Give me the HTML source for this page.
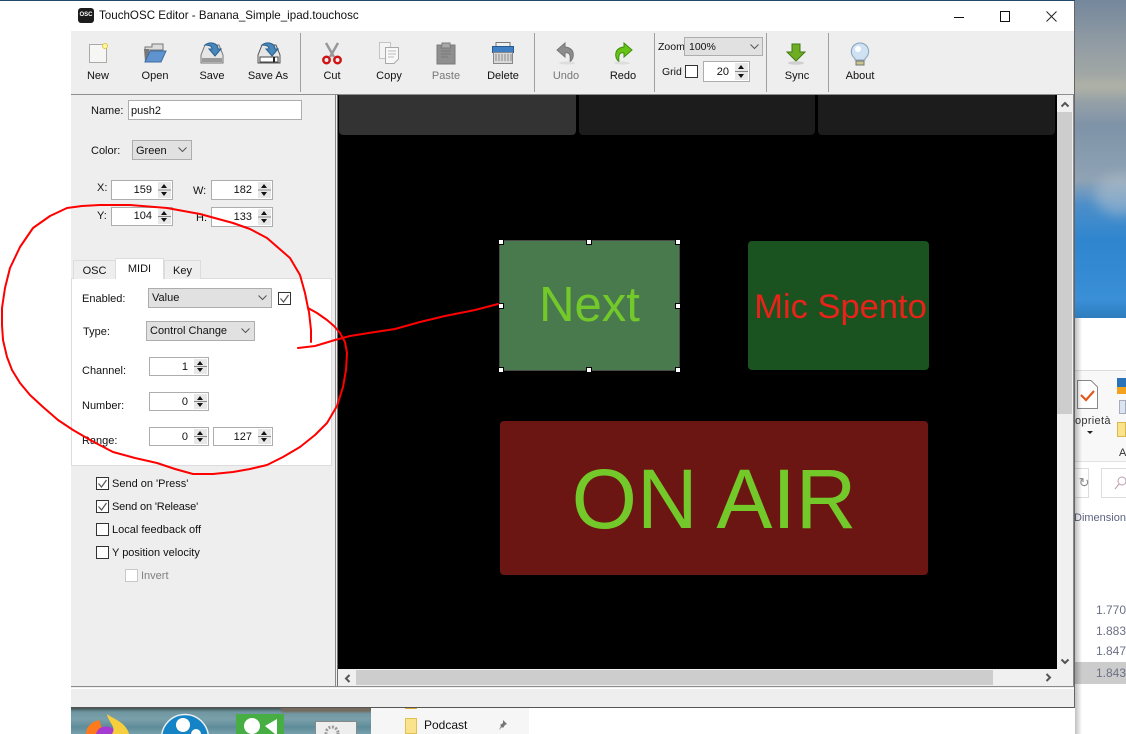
<!DOCTYPE html>
<html><head><meta charset="utf-8"><style>
html,body{margin:0;padding:0;background:#fff}
#r{position:relative;width:1126px;height:734px;overflow:hidden;background:#fff;font:11px "Liberation Sans",sans-serif;color:#111}
#r div,#r span{position:absolute;box-sizing:border-box;white-space:nowrap}
.t{transform:translateX(-50%);line-height:13px}
.l{line-height:14px;margin-top:1px}
.sep{width:1px;top:33px;height:59px;background:#a0a0a0}
.in{background:#fff;border:1px solid #adadad}
.cb{background:#e1e1e1;border:1px solid #adadad;line-height:19px;padding-left:3px}
.sp{background:#fff;border:1px solid #adadad;text-align:right;line-height:18px}
.sp b{position:absolute;right:1px;top:1px;width:13px;bottom:1px;font-weight:400;background:linear-gradient(#e8e8e8 0 46%,#888 46% 54%,#e8e8e8 54%)}
.sp i{position:absolute;right:20px;top:0;font-style:normal}
.sp b:before{content:"";position:absolute;left:3px;top:2px;border:3.5px solid transparent;border-top:0;border-bottom:4px solid #111}
.sp b:after{content:"";position:absolute;left:3px;bottom:2px;border:3.5px solid transparent;border-bottom:0;border-top:4px solid #111}
.ck{width:13px;height:13px;border:1px solid #333;background:#fff}
.tab{border:1px solid #dcdcdc;border-bottom:0;background:#eee;text-align:center;line-height:20px}
.h{width:6px;height:6px;background:#fff;border:1px solid #000}
svg{position:absolute;overflow:visible}
</style></head><body><div id="r">

<!-- backgrounds -->
<div style="left:0;top:0;width:1126px;height:1px;background:#234a6b"></div>
<div style="left:1075px;top:0;width:51px;height:318px;overflow:hidden;background:linear-gradient(#74879c 0,#8f9aa3 40px,#a6aba6 85px,#7f93a8 125px,#8fa3b5 180px,#4c8ec9 205px,#2f86cf 240px,#3a8fd6 300px,#2f7fc0 316px)">
<div style="left:20px;top:175px;width:50px;height:40px;background:#b8c4ce;opacity:.5;border-radius:50%;filter:blur(6px)"></div>
<div style="left:-5px;top:80px;width:60px;height:14px;background:#bcb9a6;opacity:.4;filter:blur(4px)"></div>
</div>
<div style="left:1075px;top:318px;width:51px;height:416px;background:#fff"></div>
<div style="left:1075px;top:370px;width:51px;height:91px;background:#f8f8f8"></div>
<div style="left:1075px;top:370px;width:51px;height:1px;background:#ddd"></div>
<div style="left:1075px;top:461px;width:51px;height:1px;background:#e2e2e2"></div>
<svg style="left:1076px;top:380px" width="24" height="30"><path d="M1.500.5H15L21.500 7V28.500H1.500Z" fill="#fff" stroke="#888"/><path d="M5 15l5 5 8-9" fill="none" stroke="#e2591b" stroke-width="2.200"/></svg>
<div class="l" style="left:1075px;top:413px;color:#333;letter-spacing:.3px">oprietà</div>
<div style="left:1087px;top:431px;border:3px solid transparent;border-top:3px solid #222"></div>
<div style="left:1117px;top:378px;width:9px;height:16px;background:linear-gradient(#2a73b8 0 9px,#f3a21e 9px)"></div>
<div style="left:1119px;top:400px;width:7px;height:14px;background:#dbe4f2;border:1px solid #aab"></div>
<div style="left:1117px;top:422px;width:9px;height:15px;background:#fbe28c;border:1px solid #d9b84c"></div>
<div class="l" style="left:1119px;top:445px;color:#333">A</div>
<div style="left:1075px;top:468px;width:14px;height:30px;border:1px solid #ddd;border-left:0;color:#888;line-height:28px;font-size:13px">&nbsp;&#8635;</div>
<div style="left:1101px;top:468px;width:25px;height:30px;border:1px solid #ddd;border-right:0"></div>
<svg style="left:1115px;top:476px" width="12" height="14"><circle cx="7" cy="5" r="4" fill="none" stroke="#b8a0b0"/><path d="M4 8L0 13" stroke="#b08ca0"/></svg>
<div class="l" style="left:1074px;top:510px;color:#5c6480">Dimension</div>
<div class="l" style="left:1096px;top:602px;color:#6d7085;font-size:12px">1.770</div>
<div class="l" style="left:1096px;top:623px;color:#6d7085;font-size:12px">1.883</div>
<div class="l" style="left:1096px;top:643px;color:#6d7085;font-size:12px">1.847</div>
<div style="left:1075px;top:662px;width:51px;height:22px;background:#ccc"></div>
<div class="l" style="left:1096px;top:665px;color:#6d7085;font-size:12px">1.843</div>
<div style="left:1075px;top:318px;width:7px;height:416px;background:linear-gradient(90deg,rgba(0,0,0,.25),rgba(0,0,0,0))"></div>

<!-- bottom strip -->
<div style="left:71px;top:707px;width:300px;height:27px;background:linear-gradient(#33403f 0,#6f95a0 5px,#7aa0aa 12px,#5f8c9a 20px,#76a0ab)"></div>
<div style="left:281px;top:707px;width:90px;height:5px;background:#77695c;filter:blur(1px)"></div>
<svg style="left:86px;top:714px" width="44" height="20"><path d="M0 20C0 12 6 8 13 6L18 20Z" fill="#ff7a1a"/><path d="M10 20C12 12 21 10 30 16L27 20Z" fill="#a53bd0"/><path d="M21 0C27 5 40 8 43 20H26C31 13 22 8 21 0Z" fill="#f7cf3c"/></svg>
<svg style="left:161px;top:714px" width="48" height="20"><circle cx="24" cy="24" r="23.500" fill="#1584c7" stroke="#e8f0f4" stroke-width="1.500"/><circle cx="22" cy="11" r="7" fill="#fff"/><circle cx="35" cy="20" r="5" fill="#fff"/><path d="M12 20H32V24H12Z" fill="#fff"/></svg>
<div style="left:236px;top:714px;width:48px;height:20px;background:#47ae44"></div>
<svg style="left:236px;top:714px" width="48" height="20"><circle cx="16" cy="12" r="8" fill="#fff"/><path d="M29 12L41 5V20H39Z" fill="#fff"/></svg>
<div style="left:315px;top:721px;width:42px;height:13px;background:#eee;border:1px solid #888;border-bottom:0"></div>
<svg style="left:323px;top:724px" width="18" height="10"><circle cx="9" cy="9" r="6" fill="none" stroke="#9a9a9a" stroke-width="3" stroke-dasharray="2 1.500"/></svg>
<div style="left:371px;top:707px;width:158px;height:27px;background:#f6f6f6"></div>
<div style="left:405px;top:707px;width:12px;height:2px;background:#d6a830"></div>
<div style="left:405px;top:718px;width:12px;height:16px;background:#fbe28c;border:1px solid #e1c14d"></div>
<div class="l" style="left:424px;top:717px;color:#111;font-size:12px">Podcast</div>
<svg style="left:496px;top:719px" width="12" height="12"><path d="M7 1l4 4-2 1-2 3-1-1-3 3 2-4-1-1 3-2z" fill="#777"/></svg>

<!-- window -->
<div style="left:71px;top:1px;width:1004px;height:707px;background:#eee;border-bottom:1px solid #555;border-right:1px solid #666"></div>
<div style="left:71px;top:1px;width:1003px;height:30px;background:#fff"></div>
<div style="left:78px;top:8px;width:16px;height:15px;background:#1c1c1c;border-radius:3px;color:#fff;font:bold 6px/15px 'Liberation Sans';text-align:center">OSC</div>
<div style="left:99px;top:8px;font-size:11.600px;line-height:15px;color:#111">TouchOSC Editor - Banana_Simple_ipad.touchosc</div>
<div style="left:954px;top:17px;width:10px;height:1px;background:#111"></div>
<div style="left:1000px;top:11px;width:10px;height:11px;border:1px solid #111"></div>
<svg style="left:1046px;top:11px" width="11" height="11"><path d="M.5.5l10 10M10.500.5l-10 10" stroke="#222" fill="none"/></svg>

<!-- toolbar -->
<div class="sep" style="left:300px"></div><div class="sep" style="left:534px"></div><div class="sep" style="left:654px"></div><div class="sep" style="left:766px"></div><div class="sep" style="left:828px"></div>
<div style="left:71px;top:94px;width:1003px;height:1px;background:#8f8f8f"></div>

<svg style="left:88px;top:42px" width="20" height="22"><path d="M1.500 2.500H18.500V20.500H1.500Z" fill="#f6f6f4" stroke="#aaa"/><circle cx="17" cy="4" r="2.500" fill="#fff6a8" stroke="#e0c840"/></svg>
<svg style="left:143px;top:42px" width="24" height="22"><path d="M2 5H9V2H20V8H2Z" fill="#dcdcdc" stroke="#777"/><path d="M2 20L1 7H6V20Z" fill="#777"/><path d="M2 20L7 9H23L18 20Z" fill="#5f93cf" stroke="#3c6ca3"/></svg>
<svg style="left:200px;top:41px" width="24" height="24"><path d="M5 4H19L23 14V22H1V14Z" fill="#e6e6e6" stroke="#777"/><path d="M2 17H22V21H2Z" fill="#9a9a9a"/><path d="M5 4C10 0 18 2 18 8H21L15 15 9 8H12C12 5 9 4 5 4Z" fill="#4787bb" stroke="#2b5f8c"/></svg>
<svg style="left:257px;top:41px" width="24" height="24"><path d="M5 4H19L23 14V22H1V14Z" fill="#e6e6e6" stroke="#555"/><path d="M3 16H21V21H3Z" fill="#fff" stroke="#444"/><path d="M17 16V21" stroke="#222" stroke-width="2"/><path d="M5 4C10 0 18 2 18 8H21L15 15 9 8H12C12 5 9 4 5 4Z" fill="#4787bb" stroke="#2b5f8c"/></svg>
<svg style="left:321px;top:41px" width="22" height="24"><path d="M5 2L13 16M17 2L9 16" stroke="#999" stroke-width="2.500" fill="none"/><circle cx="5.500" cy="19" r="3.200" fill="none" stroke="#cf1414" stroke-width="2.500"/><circle cx="16.500" cy="19" r="3.200" fill="none" stroke="#cf1414" stroke-width="2.500"/></svg>
<svg style="left:378px;top:41px" width="22" height="24"><path d="M1.500 1.500H12.500V17.500H1.500Z" fill="#f4f4f4" stroke="#c4c4c4"/><path d="M7.500 6.500H20.500V18L16 22.500H7.500Z" fill="#f8f8f8" stroke="#aaa"/><path d="M10 10H18M10 13H18M10 16H16" stroke="#bbb"/></svg>
<svg style="left:435px;top:41px" width="22" height="24"><path d="M2 4H20V23H2Z" fill="#8f8f8f" stroke="#7a7a7a"/><path d="M7 4V2H15V4L16 7H6Z" fill="#a8a8a8" stroke="#7a7a7a"/><path d="M6 10H16M6 13H16M6 16H13" stroke="#7a7a7a"/></svg>
<svg style="left:491px;top:41px" width="24" height="24"><path d="M5 1.500H19V7H5Z" fill="#f0f0f0" stroke="#777"/><path d="M1.500 5.500H22.500V11.500H1.500Z" fill="#3f7fc4" stroke="#28598f"/><path d="M2.500 11.500H21.500V22.500H2.500Z" fill="#d8d8d8" stroke="#888"/><path d="M5 13V20M8 13V20M11 13V20M14 13V20M17 13V20M20 13V20" stroke="#888"/></svg>
<svg style="left:555px;top:41px" width="22" height="24"><path d="M10 2L2 9 10 16V12C14 11 16 13 15 21 20 16 20 7 10 6Z" fill="#8c8c8c" stroke="#777"/><ellipse cx="12" cy="22" rx="8" ry="1.500" fill="#ddd"/></svg>
<svg style="left:612px;top:41px" width="22" height="24"><path d="M12 2L20 9 12 16V12C8 11 6 13 7 21 2 16 2 7 12 6Z" fill="#67c417" stroke="#3e8f0d"/><ellipse cx="10" cy="22" rx="8" ry="1.500" fill="#ddd"/></svg>
<svg style="left:785px;top:42px" width="22" height="24"><path d="M7 2H15V10H20L11 19 2 10H7Z" fill="#6fae22" stroke="#3f7a12"/><ellipse cx="11" cy="21" rx="8" ry="1.800" fill="#cfcfcf"/></svg>
<svg style="left:849px;top:42px" width="22" height="24"><path d="M11 1a8.500 8.500 0 0 1 5 15.500V18H6V16.500A8.500 8.500 0 0 1 11 1Z" fill="#cfe2f4" stroke="#8aa2b8"/><path d="M7 19H15V23H7Z" fill="#c9c48a" stroke="#777"/><circle cx="9" cy="7" r="3" fill="#fff"/></svg>

<div class="t" style="left:98px;top:70px">New</div>
<div class="t" style="left:155px;top:70px">Open</div>
<div class="t" style="left:212px;top:70px">Save</div>
<div class="t" style="left:268px;top:70px">Save As</div>
<div class="t" style="left:332px;top:70px">Cut</div>
<div class="t" style="left:389px;top:70px">Copy</div>
<div class="t" style="left:446px;top:70px;color:#777">Paste</div>
<div class="t" style="left:503px;top:70px">Delete</div>
<div class="t" style="left:566px;top:70px;color:#777">Undo</div>
<div class="t" style="left:623px;top:70px">Redo</div>
<div class="t" style="left:797px;top:70px">Sync</div>
<div class="t" style="left:860px;top:70px">About</div>

<div class="l" style="left:658px;top:39px;font-size:10.500px">Zoom</div>
<div class="cb" style="left:684px;top:37px;width:79px;height:19px;font-size:10.500px;line-height:18px;padding-left:4px">100%</div>
<svg style="left:750px;top:44px" width="9" height="6"><path d="M.5.5L4.500 4.500 8.500.5" fill="none" stroke="#555"/></svg>
<div class="l" style="left:662px;top:64px;font-size:10.500px">Grid</div>
<div class="ck" style="left:685px;top:65px"></div>
<div class="sp" style="left:703px;top:61px;width:47px;height:21px;line-height:20px"><i>20</i><b></b></div>

<!-- frames -->
<div style="left:335px;top:94px;width:1px;height:593px;background:#8a8a8a"></div>
<div style="left:337px;top:94px;width:1px;height:593px;background:#707070"></div>
<div style="left:71px;top:686px;width:1003px;height:1px;background:#8a8a8a"></div>
<div style="left:71px;top:688px;width:1003px;height:1px;background:#fff"></div>
<div style="left:1073px;top:94px;width:1px;height:593px;background:#8a8a8a"></div>

<!-- left panel -->
<div class="l" style="left:91px;top:103px">Name:</div>
<div class="in" style="left:128px;top:100px;width:174px;height:20px;line-height:20px;padding-left:2px">push2</div>
<div class="l" style="left:91px;top:143px">Color:</div>
<div class="cb" style="left:132px;top:140px;width:60px;height:20px;line-height:20px">Green</div>
<svg style="left:178px;top:147px" width="9" height="6"><path d="M.5.5L4.500 4.500 8.500.5" fill="none" stroke="#555"/></svg>
<div class="l" style="left:97px;top:180px">X:</div>
<div class="sp" style="left:111px;top:180px;width:62px;height:20px"><i>159</i><b></b></div>
<div class="l" style="left:193px;top:183px">W:</div>
<div class="sp" style="left:211px;top:180px;width:62px;height:20px"><i>182</i><b></b></div>
<div class="l" style="left:97px;top:208px">Y:</div>
<div class="sp" style="left:111px;top:207px;width:62px;height:19px;line-height:16px"><i>104</i><b></b></div>
<div class="l" style="left:196px;top:210px">H:</div>
<div class="sp" style="left:211px;top:207px;width:62px;height:20px"><i>133</i><b></b></div>

<div style="left:71px;top:278px;width:261px;height:188px;background:#fff;border:1px solid #dcdcdc"></div>
<div class="tab" style="left:73px;top:260px;width:43px;height:19px">OSC</div>
<div class="tab" style="left:164px;top:260px;width:37px;height:19px">Key</div>
<div class="tab" style="left:115px;top:258px;width:49px;height:21px;background:#fff">MIDI</div>

<div class="l" style="left:82px;top:291px">Enabled:</div>
<div class="cb" style="left:148px;top:288px;width:124px;height:20px">Value</div>
<svg style="left:258px;top:295px" width="9" height="6"><path d="M.5.5L4.500 4.500 8.500.5" fill="none" stroke="#555"/></svg>
<div class="ck" style="left:278px;top:292px"></div>
<svg style="left:278px;top:292px" width="13" height="13"><path d="M2.500 6.500L5.500 10 10.500 3" fill="none" stroke="#555" stroke-width="1.200"/></svg>
<div class="l" style="left:83px;top:324px">Type:</div>
<div class="cb" style="left:146px;top:321px;width:109px;height:20px">Control Change</div>
<svg style="left:241px;top:328px" width="9" height="6"><path d="M.5.5L4.500 4.500 8.500.5" fill="none" stroke="#555"/></svg>
<div class="l" style="left:82px;top:363px">Channel:</div>
<div class="sp" style="left:149px;top:357px;width:60px;height:19px"><i>1</i><b></b></div>
<div class="l" style="left:82px;top:398px">Number:</div>
<div class="sp" style="left:149px;top:392px;width:60px;height:19px"><i>0</i><b></b></div>
<div class="l" style="left:82px;top:433px">Range:</div>
<div class="sp" style="left:149px;top:427px;width:60px;height:19px"><i>0</i><b></b></div>
<div class="sp" style="left:213px;top:427px;width:60px;height:19px"><i>127</i><b></b></div>

<div class="ck" style="left:96px;top:477px"></div><svg style="left:96px;top:477px" width="13" height="13"><path d="M2.500 6.500L5.500 10 10.500 3" fill="none" stroke="#555" stroke-width="1.200"/></svg>
<div class="l" style="left:112px;top:476px">Send on 'Press'</div>
<div class="ck" style="left:96px;top:500px"></div><svg style="left:96px;top:500px" width="13" height="13"><path d="M2.500 6.500L5.500 10 10.500 3" fill="none" stroke="#555" stroke-width="1.200"/></svg>
<div class="l" style="left:112px;top:499px;letter-spacing:-.15px">Send on 'Release'</div>
<div class="ck" style="left:96px;top:523px"></div>
<div class="l" style="left:112px;top:522px">Local feedback off</div>
<div class="ck" style="left:96px;top:546px"></div>
<div class="l" style="left:112px;top:545px">Y position velocity</div>
<div class="ck" style="left:125px;top:569px;border-color:#c8c8c8"></div>
<div class="l" style="left:141px;top:568px;color:#808080">Invert</div>

<!-- canvas -->
<div style="left:338px;top:95px;width:719px;height:574px;background:#000"></div>
<div style="left:339px;top:95px;width:237px;height:40px;background:#333;border-radius:0 0 4px 4px"></div>
<div style="left:579px;top:95px;width:236px;height:40px;background:#1c1c1c;border-radius:0 0 4px 4px"></div>
<div style="left:818px;top:95px;width:237px;height:40px;background:#1c1c1c;border-radius:0 0 4px 4px"></div>

<div style="left:499px;top:240px;width:181px;height:131px;background:#487a4e;border:1.500px solid #4a4a4a;text-align:center;color:#73c92a;font-size:49px;line-height:128px">Next</div>
<div class="h" style="left:498px;top:239px"></div><div class="h" style="left:586px;top:239px"></div><div class="h" style="left:675px;top:239px"></div>
<div class="h" style="left:498px;top:303px"></div><div class="h" style="left:675px;top:303px"></div>
<div class="h" style="left:498px;top:367px"></div><div class="h" style="left:586px;top:367px"></div><div class="h" style="left:675px;top:367px"></div>
<div style="left:748px;top:241px;width:181px;height:129px;background:#1a5220;border-radius:4px;text-align:center;color:#e8231a;font-size:34.500px;line-height:132px;padding-left:4px">Mic Spento</div>
<div style="left:500px;top:421px;width:428px;height:154px;background:#6b1612;border-radius:4px;text-align:center;color:#73c92a;font-size:84px;line-height:156px">ON AIR</div>

<!-- scrollbars -->
<div style="left:1057px;top:95px;width:16px;height:591px;background:#f0f0f0"></div>
<div style="left:1057px;top:112px;width:15px;height:302px;background:#cdcdcd"></div>
<svg style="left:1060px;top:101px" width="10" height="7"><path d="M1.500 5.500L5 2 8.500 5.500" fill="none" stroke="#555" stroke-width="2"/></svg>
<svg style="left:1060px;top:658px" width="10" height="7"><path d="M1.500 1.500L5 5 8.500 1.500" fill="none" stroke="#555" stroke-width="2"/></svg>
<div style="left:338px;top:669px;width:719px;height:17px;background:#f0f0f0"></div>
<div style="left:356px;top:670px;width:637px;height:15px;background:#cdcdcd"></div>
<svg style="left:344px;top:674px" width="7" height="9"><path d="M5.500 1L2 4.500 5.500 8" fill="none" stroke="#555" stroke-width="2"/></svg>
<svg style="left:1045px;top:673px" width="7" height="9"><path d="M1.500 1L5 4.500 1.500 8" fill="none" stroke="#555" stroke-width="2"/></svg>

<!-- annotation -->
<svg style="left:0;top:0;pointer-events:none" width="1126" height="734"><g fill="none" stroke="#f00" stroke-width="2" stroke-linecap="round" stroke-linejoin="round"><path d="M311 342L311 330 309 312 308 308 305 293 300 275 290 258 267 238 250 229 233 223 200 214 167 208 130 205 100 205 82 206 67 208 50 216 33 228 20 247 10 268 5 288 2 308 2 325 3 340 7 357 12 370 20 383 30 395 43 407 58 420 73 430 92 441 113 452 135 458 157 463 175 469 193 474 213 474 233 472 250 469 267 465 283 457 300 447 315 435 327 423 337 406 343 387 346 370 347 353 345 342 340 333 334 326 327 320 317 313 308 308"/><path d="M298 348L315 346 335 340 350 336 375 332 395 329 420 322 445 316 475 310 498 304"/></g></svg>
</div></body></html>
